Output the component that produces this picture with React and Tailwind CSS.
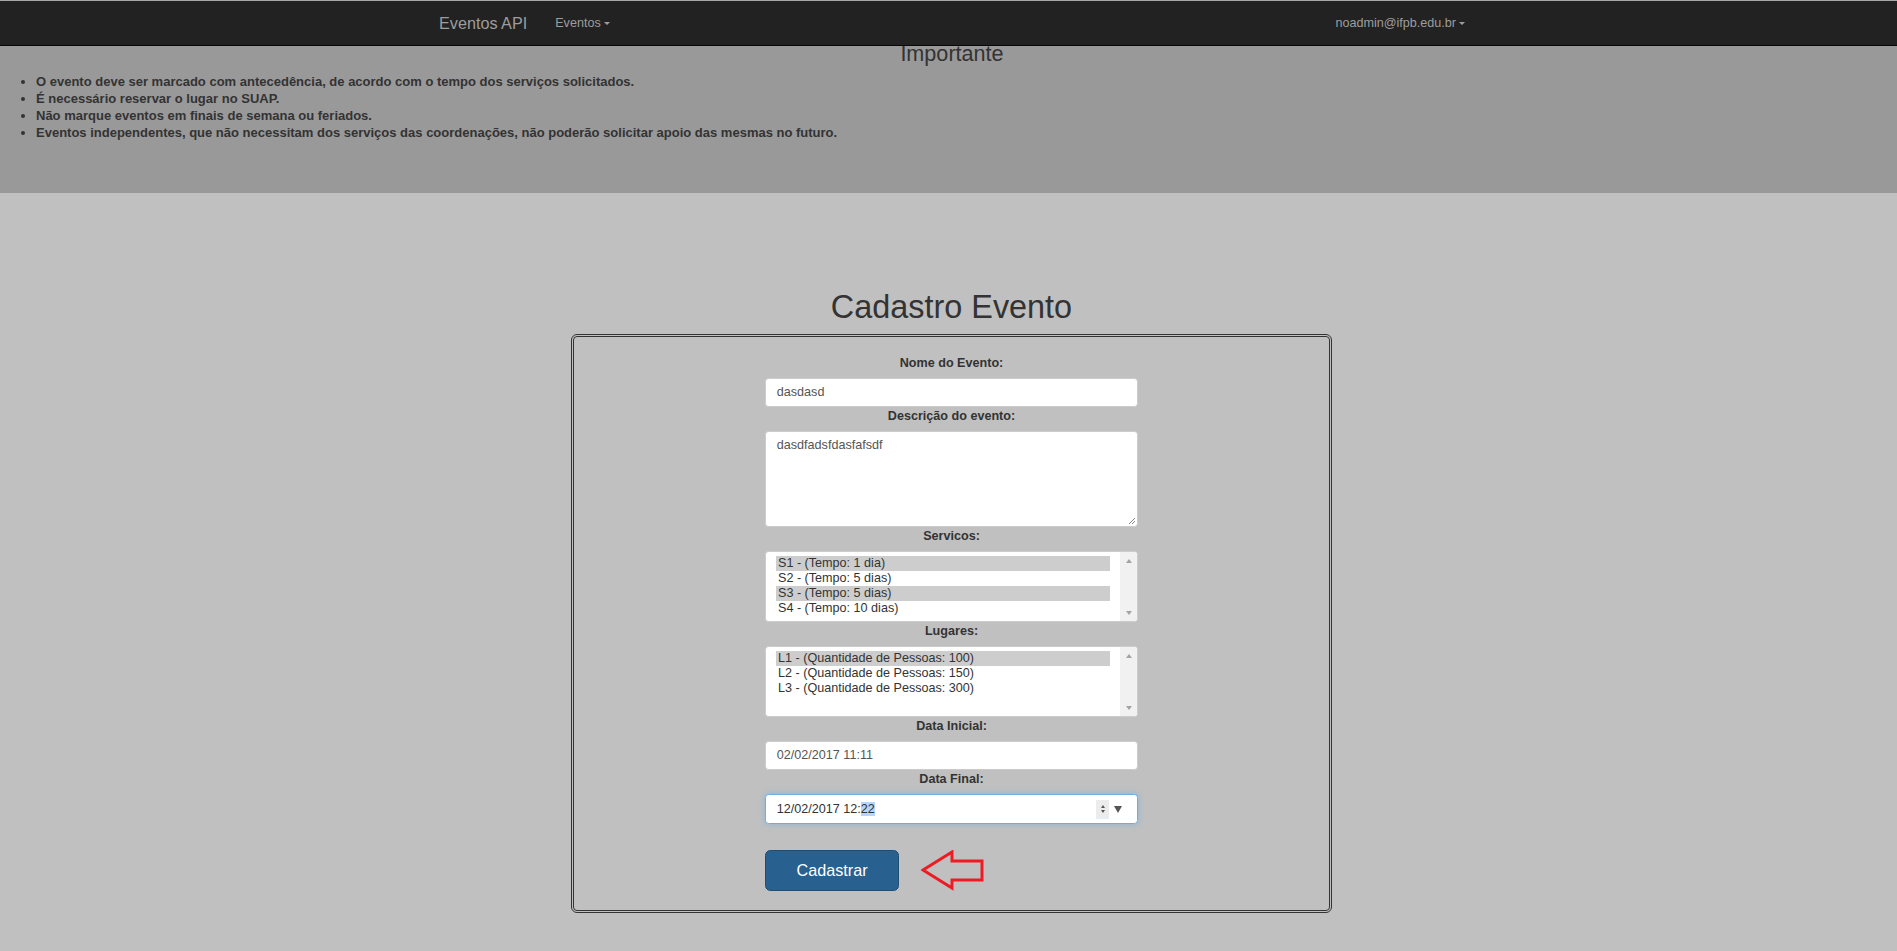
import React from "react";

const servicos = [
  "S1 - (Tempo: 1 dia)",
  "S2 - (Tempo: 5 dias)",
  "S3 - (Tempo: 5 dias)",
  "S4 - (Tempo: 10 dias)",
];

const lugares = [
  "L1 - (Quantidade de Pessoas: 100)",
  "L2 - (Quantidade de Pessoas: 150)",
  "L3 - (Quantidade de Pessoas: 300)",
];

const avisos = [
  "O evento deve ser marcado com antecedência, de acordo com o tempo dos serviços solicitados.",
  "É necessário reservar o lugar no SUAP.",
  "Não marque eventos em finais de semana ou feriados.",
  "Eventos independentes, que não necessitam dos serviços das coordenações, não poderão solicitar apoio das mesmas no futuro.",
];

const Caret = () => (
  <span className="ml-[3px] inline-block h-0 w-0 border-x-[3.6px] border-t-[3.6px] border-x-transparent border-t-[#9d9d9d] align-middle"></span>
);

const Label = ({ children }) => (
  <div className="mb-[6px] h-[18px] text-center text-[12.6px] font-bold leading-[18px] text-[#333]">{children}</div>
);

const ListBox = ({ items, selected }) => (
  <div className="flex h-[71px] w-full overflow-hidden rounded-[3.6px] border border-[#cccccc] bg-white">
    <div className="flex-1 py-[4px] pl-[10px] pr-[10px]">
      {items.map((t, i) => (
        <div
          key={t}
          className={selected.includes(i) ? "h-[15px] bg-[#cdcdcd] pl-[2px] text-[12.6px] leading-[15px] text-[#333]" : "h-[15px] pl-[2px] text-[12.6px] leading-[15px] text-[#333]"}
        >
          {t}
        </div>
      ))}
    </div>
    <div className="flex w-[17px] flex-col items-center justify-between bg-[#f1f1f1] pb-[6px] pt-[7px]">
      <span className="h-0 w-0 border-x-[3.5px] border-b-[4px] border-x-transparent border-b-[#a3a3a3]"></span>
      <span className="h-0 w-0 border-x-[3.5px] border-t-[4px] border-x-transparent border-t-[#a3a3a3]"></span>
    </div>
  </div>
);

export default function App() {
  return (
    <div className="min-h-[951px] bg-[#c0c0c0] font-['Liberation_Sans',Arial,sans-serif] text-[#333]">
      {/* navbar */}
      <nav className="relative z-10 h-[46px] border-y border-t-[#a8a8a8] border-b-[#080808] bg-[#222222]">
        <div className="flex h-full items-center pl-[439px] pr-[432px]">
          <span className="text-[16.2px] text-[#9d9d9d]">Eventos API</span>
          <span className="ml-[28px] text-[12.6px] text-[#9d9d9d]">
            Eventos
            <Caret />
          </span>
          <span className="ml-auto text-[12.6px] text-[#9d9d9d]">
            noadmin@ifpb.edu.br
            <Caret />
          </span>
        </div>
      </nav>

      {/* importante */}
      <div className="bg-[#999999] pb-[52px]">
        <h3 className="pl-[7px] text-center text-[21.6px] leading-[15px] text-[#333]">Importante</h3>
        <ul className="mt-[12px] list-disc pl-[36px] text-[13px] font-bold leading-[17px] text-[#333]">
          {avisos.map((a) => (
            <li key={a}>{a}</li>
          ))}
        </ul>
      </div>

      {/* cadastro */}
      <div className="pl-[6px]">
        <h1 className="mt-[96px] text-center text-[32.4px] leading-[36px] text-[#333]">Cadastro Evento</h1>
        <div className="mx-auto mt-[9px] h-[579px] w-[761px] rounded-[6px] border-[3px] border-double border-[#333]">
          <div className="mx-auto w-[373px] pt-[17px]">
            <Label>Nome do Evento:</Label>
            <div className="flex h-[29px] items-center rounded-[3.6px] border border-[#cccccc] bg-white px-[10.8px] text-[12.6px] text-[#555]">
              dasdasd
            </div>

            <Label>Descrição do evento:</Label>
            <div className="relative h-[96px] rounded-[3.6px] border border-[#cccccc] bg-white px-[10.8px] pb-[5.4px] pt-[3.5px] text-[12.6px] leading-[18px] text-[#555]">
              dasdfadsfdasfafsdf
              <svg className="absolute bottom-[1px] right-[1px]" width="8" height="8" viewBox="0 0 8 8">
                <path d="M7 1 L1 7 M7 4 L4 7" stroke="#888" strokeWidth="1" />
              </svg>
            </div>

            <Label>Servicos:</Label>
            <ListBox items={servicos} selected={[0, 2]} />

            <Label>Lugares:</Label>
            <ListBox items={lugares} selected={[0]} />

            <Label>Data Inicial:</Label>
            <div className="flex h-[29px] items-center rounded-[3.6px] border border-[#cccccc] bg-white px-[10.8px] text-[12.6px] text-[#555]">
              02/02/2017 11:11
            </div>

            <Label>Data Final:</Label>
            <div className="flex h-[30px] items-center rounded-[3.6px] border border-[#66afe9] bg-white px-[10.8px] text-[12.6px] text-[#333] shadow-[0_0_6px_rgba(102,175,233,0.6)]">
              <span>
                12/02/2017 12:<span className="bg-[#b4d5fe]">22</span>
              </span>
              <div className="ml-auto mr-[4px] flex items-center gap-[5px]">
                <div className="flex h-[19px] w-[13px] flex-col items-center justify-center gap-[2px] bg-[#ececec]">
                  <span className="h-0 w-0 border-x-[2.5px] border-b-[3px] border-x-transparent border-b-[#555]"></span>
                  <span className="h-0 w-0 border-x-[2.5px] border-t-[3px] border-x-transparent border-t-[#555]"></span>
                </div>
                <span className="h-0 w-0 border-x-[4px] border-t-[7px] border-x-transparent border-t-[#555]"></span>
              </div>
            </div>

            <div className="mt-[26px] flex items-center gap-[22px]">
              <button className="h-[41px] w-[134px] rounded-[5.4px] border border-[#204d74] bg-[#286090] text-[16.2px] text-white">
                Cadastrar
              </button>
              <svg width="64" height="41" viewBox="0 0 64 41">
                <polygon
                  points="2,20 31,2 31,11 61,11 61,30 31,30 31,38"
                  fill="none"
                  stroke="#ed1c24"
                  strokeWidth="3"
                  strokeLinejoin="miter"
                />
              </svg>
            </div>
          </div>
        </div>
      </div>
    </div>
  );
}
